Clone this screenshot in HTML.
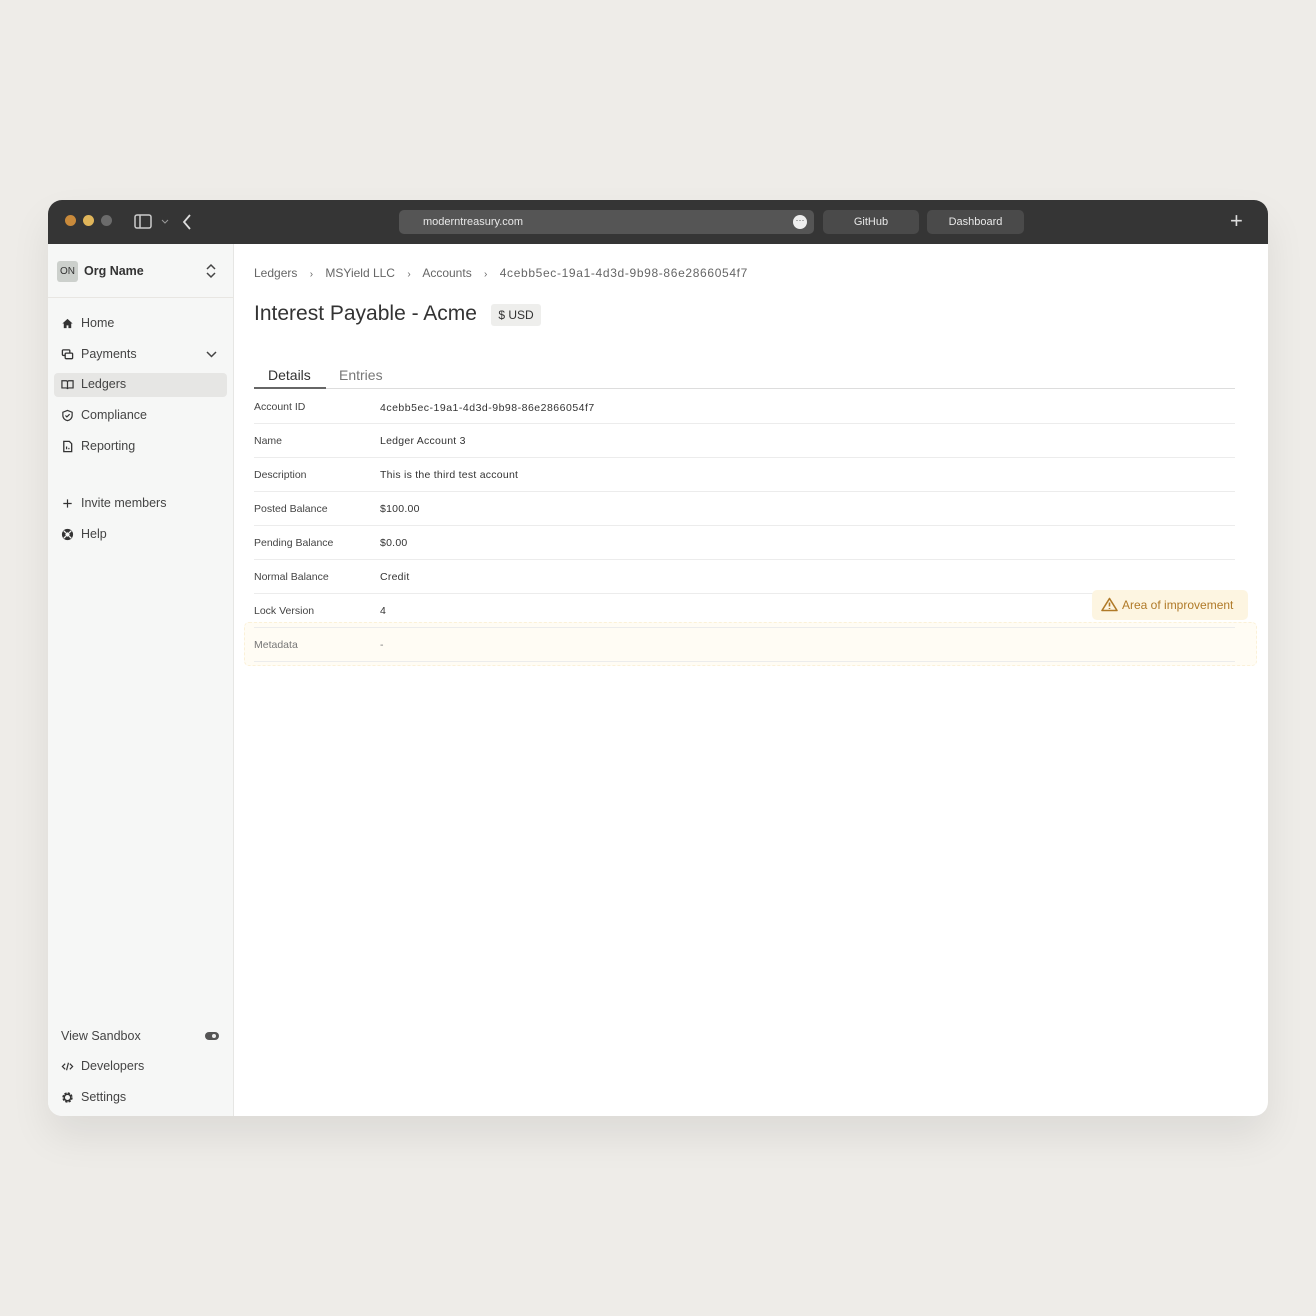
<!DOCTYPE html>
<html><head><style>
*{box-sizing:border-box;margin:0;padding:0}
body{width:1316px;height:1316px;background:#eeece8;font-family:"Liberation Sans",sans-serif;position:relative;overflow:hidden;color:#333}
.win{position:absolute;left:48px;top:200px;width:1220px;height:916px;border-radius:14px;overflow:hidden;background:#fff;box-shadow:0 20px 40px rgba(0,0,0,.08)}
.bar{position:absolute;left:0;top:0;width:1220px;height:44px;background:#353535}
.dot{position:absolute;top:15px;width:11px;height:11px;border-radius:50%}
.pill{position:absolute;top:10px;height:24px;background:#4a4a4a;border-radius:5px;color:#e8e8e8;font-size:11px;line-height:24px;text-align:center}
.side{position:absolute;left:0;top:44px;width:186px;height:872px;background:#f6f7f6;border-right:1px solid #e6e6e4}
.nav{position:absolute;left:13px;font-size:12.5px;color:#444;display:flex;align-items:center;gap:7px}
.nav svg{width:13px;height:13px}
.t{position:absolute;white-space:nowrap}
.row{position:absolute;left:206px;width:981px;height:1px;background:#ececec}
.lab{position:absolute;left:206px;font-size:10.5px;color:#444}
.val{position:absolute;left:332px;font-size:10.5px;color:#333;letter-spacing:0.25px}
</style></head><body>
<div class="win">
 <div class="bar">
  <div class="dot" style="left:17px;background:#c98a3b"></div>
  <div class="dot" style="left:35px;background:#e0b55a"></div>
  <div class="dot" style="left:53px;background:#6b6b6b"></div>
  <svg style="position:absolute;left:86px;top:14px" width="18" height="15" viewBox="0 0 18 15"><rect x="1" y="1" width="16" height="13" rx="2" fill="none" stroke="#ccc" stroke-width="1.5"/><line x1="6" y1="1" x2="6" y2="14" stroke="#ccc" stroke-width="1.5"/></svg>
  <svg style="position:absolute;left:113px;top:19px" width="8" height="6"><path d="M1 1l3 3 3-3" stroke="#999" fill="none"/></svg>
  <svg style="position:absolute;left:134px;top:14px" width="10" height="16"><path d="M8 1L2 8l6 7" stroke="#ddd" stroke-width="1.8" fill="none"/></svg>
  <div class="pill" style="left:351px;width:415px;text-align:left;padding-left:24px;background:#555">moderntreasury.com</div>
  <div style="position:absolute;left:745px;top:15px;width:14px;height:14px;border-radius:50%;background:#eee;font-size:9px;color:#555;text-align:center;line-height:10px">···</div>
  <div class="pill" style="left:775px;width:96px">GitHub</div>
  <div class="pill" style="left:879px;width:97px">Dashboard</div>
  <div style="position:absolute;left:1182px;top:8px;color:#ddd;font-size:22px;line-height:26px">+</div>
 </div>
 <div class="side">
  <div style="position:absolute;left:9px;top:17px;width:21px;height:21px;background:#ccd0cc;border-radius:3px;font-size:10px;line-height:21px;text-align:center;color:#333">ON</div>
  <div class="t" style="left:36px;top:20px;font-size:12.5px;font-weight:bold;color:#333">Org Name</div>
  <svg style="position:absolute;left:158px;top:19px" width="10" height="16"><path d="M1 6l4-4 4 4M1 10l4 4 4-4" stroke="#444" stroke-width="1.5" fill="none"/></svg>
  <div style="position:absolute;left:0;top:53px;width:186px;height:1px;background:#e8e6e2"></div>
  <div style="position:absolute;left:6px;top:129px;width:173px;height:24px;background:#e6e6e4;border-radius:4px"></div>
  <div class="nav" style="top:72px"><svg viewBox="0 0 14 14"><path d="M7 2L1.5 7H3v5h3V9h2v3h3V7h1.5z" fill="#333"/></svg>Home</div>
  <div class="nav" style="top:103px"><svg viewBox="0 0 14 14"><rect x="1.5" y="2" width="8" height="6" rx="1" fill="none" stroke="#333" stroke-width="1.4"/><rect x="4.5" y="5.5" width="8" height="6" rx="1" fill="#f6f7f6" stroke="#333" stroke-width="1.4"/></svg>Payments</div>
  <svg style="position:absolute;left:158px;top:107px" width="11" height="7"><path d="M1 1l4.5 4.5L10 1" stroke="#444" stroke-width="1.5" fill="none"/></svg>
  <div class="nav" style="top:133px"><svg viewBox="0 0 14 14"><path d="M1 3h4.5c1 0 1.5.6 1.5 1.5V12c0-.8-.6-1.3-1.5-1.3H1zM13 3H8.5C7.5 3 7 3.6 7 4.5V12c0-.8.6-1.3 1.5-1.3H13z" fill="none" stroke="#333" stroke-width="1.3"/></svg>Ledgers</div>
  <div class="nav" style="top:164px"><svg viewBox="0 0 14 14"><path d="M7 1.5l5 2v3.5c0 3-2.3 5-5 5.5-2.7-.5-5-2.5-5-5.5V3.5z" fill="none" stroke="#333" stroke-width="1.3"/><path d="M4.8 7l1.5 1.5L9.3 5.6" stroke="#333" stroke-width="1.3" fill="none"/></svg>Compliance</div>
  <div class="nav" style="top:195px"><svg viewBox="0 0 14 14"><path d="M3 1.5h6l2.5 2.5v8.5H3z" fill="none" stroke="#333" stroke-width="1.4"/><path d="M6 10V7M8.5 10V8.5" stroke="#333" stroke-width="1.3"/></svg>Reporting</div>
  <div class="nav" style="top:252px"><svg viewBox="0 0 14 14"><path d="M7 2.5v9M2.5 7h9" stroke="#333" stroke-width="1.3"/></svg>Invite members</div>
  <div class="nav" style="top:283px"><svg viewBox="0 0 14 14"><circle cx="7" cy="7" r="6" fill="#333"/><circle cx="7" cy="7" r="2.3" fill="#f6f7f6"/><path d="M3 3l2.2 2.2M11 3L8.8 5.2M3 11l2.2-2.2M11 11L8.8 8.8" stroke="#f6f7f6" stroke-width="1.4"/></svg>Help</div>
  <div class="t" style="left:13px;top:785px;font-size:12.5px;color:#444">View Sandbox</div>
  <div style="position:absolute;left:157px;top:788px;width:14px;height:8px;border-radius:4px;background:#555"><div style="position:absolute;left:7px;top:2px;width:4px;height:4px;border-radius:50%;background:#eee"></div></div>
  <div class="nav" style="top:815px"><svg viewBox="0 0 14 14"><path d="M4.5 4L1.5 7l3 3M9.5 4l3 3-3 3M8 3L6 11" stroke="#333" stroke-width="1.3" fill="none"/></svg>Developers</div>
  <div class="nav" style="top:846px"><svg viewBox="0 0 14 14"><circle cx="7" cy="7" r="4.3" fill="none" stroke="#333" stroke-width="2.6" stroke-dasharray="2.2 1.2"/><circle cx="7" cy="7" r="3.5" fill="none" stroke="#333" stroke-width="1.6"/></svg>Settings</div>
 </div>
 <div class="t" style="left:206px;top:66px;font-size:12px;color:#666">Ledgers <span style="margin:0 9px;font-size:10px">›</span> MSYield LLC <span style="margin:0 9px;font-size:10px">›</span> Accounts <span style="margin:0 9px;font-size:10px">›</span> <span style="letter-spacing:0.65px">4cebb5ec-19a1-4d3d-9b98-86e2866054f7</span></div>
 <div class="t" style="left:206px;top:102px;font-size:21px;color:#333">Interest Payable - Acme</div>
 <div style="position:absolute;left:443px;top:104px;width:50px;height:22px;background:#eeeeec;border-radius:3px;font-size:12px;line-height:22px;text-align:center;color:#333">$ USD</div>
 <div class="t" style="left:220px;top:167px;font-size:14px;color:#333">Details</div>
 <div class="t" style="left:291px;top:167px;font-size:14px;color:#777">Entries</div>
 <div class="row" style="top:188px;height:1px;background:#ddd"></div>
 <div style="position:absolute;left:206px;top:187px;width:72px;height:2px;background:#666"></div>
 <div class="lab" style="top:201px">Account ID</div><div class="val" style="top:202px;letter-spacing:0.5px">4cebb5ec-19a1-4d3d-9b98-86e2866054f7</div>
 <div class="row" style="top:223px"></div>
 <div class="lab" style="top:235px">Name</div><div class="val" style="top:235px">Ledger Account 3</div>
 <div class="row" style="top:257px"></div>
 <div class="lab" style="top:269px">Description</div><div class="val" style="top:269px">This is the third test account</div>
 <div class="row" style="top:291px"></div>
 <div class="lab" style="top:303px">Posted Balance</div><div class="val" style="top:303px">$100.00</div>
 <div class="row" style="top:325px"></div>
 <div class="lab" style="top:337px">Pending Balance</div><div class="val" style="top:337px">$0.00</div>
 <div class="row" style="top:359px"></div>
 <div class="lab" style="top:371px">Normal Balance</div><div class="val" style="top:371px">Credit</div>
 <div class="row" style="top:393px"></div>
 <div class="lab" style="top:405px">Lock Version</div><div class="val" style="top:405px">4</div>
 <div style="position:absolute;left:196px;top:422px;width:1013px;height:44px;background:#fffcf4;border:1px dashed #fbf1d8;border-radius:5px"></div>
 <div class="row" style="top:427px"></div>
 <div class="lab" style="top:439px;color:#777">Metadata</div><div class="val" style="top:439px;color:#777">-</div>
 <div class="row" style="top:461px"></div>
 <div style="position:absolute;left:1044px;top:390px;width:156px;height:30px;background:#fdf5e1;border-radius:5px;color:#b07a28;font-size:12px;line-height:30px;padding-left:30px">Area of improvement
  <svg style="position:absolute;left:9px;top:7px" width="17" height="15" viewBox="0 0 17 15"><path d="M8.5 1.5L1 13.5h15z" fill="none" stroke="#b07a28" stroke-width="1.6" stroke-linejoin="round"/><path d="M8.5 5.5v4M8.5 11v1" stroke="#b07a28" stroke-width="1.6"/></svg></div>
</div>
</body></html>
